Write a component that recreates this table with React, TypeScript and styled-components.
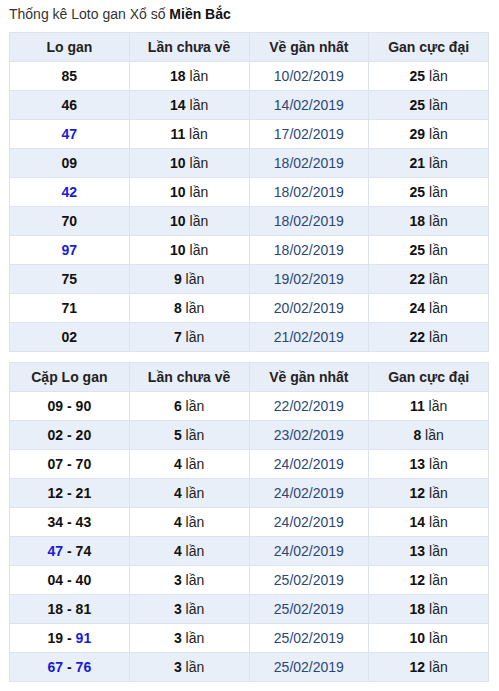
import React from "react";
import styled, { createGlobalStyle } from "styled-components";

const GlobalStyle = createGlobalStyle`
    body {
        margin: 0;
        background: #fff;
        font-family: "Liberation Sans", Arial, sans-serif;
        color: #222;
    }
`

const Page = styled.div`
    padding: 6px 10px 8px 9px;
    width: 480px;
`

const Title = styled.div`
    font-size: 14px;
    line-height: 17px;
    color: #333;
    margin-bottom: 9px;

    b {
        color: #111;
    }
`

const Table = styled.table`
    width: 480px;
    border-collapse: collapse;
    table-layout: fixed;
    margin-bottom: 10px;
    font-size: 14px;
`

const HeadCell = styled.th`
    height: 28px;
    padding: 0;
    background: #e8eef8;
    border: 1px solid #dde3ee;
    font-weight: bold;
    color: #222;
    text-align: center;
`

const Row = styled.tr<{ $alt: boolean }>`
    background: ${p => (p.$alt ? "#e9eff8" : "#fff")};
`

const Cell = styled.td`
    height: 28px;
    padding: 0;
    border: 1px solid #dde3ee;
    text-align: center;
    color: #222;
`

const Num = styled.b<{ $blue?: boolean }>`
    color: ${p => (p.$blue ? "#1a1ad8" : "#111")};
`

const DateText = styled.span`
    color: #2a4776;
`

type Item = [string, number, string, number];

const single: Item[] = [
    ["85", 18, "10/02/2019", 25],
    ["46", 14, "14/02/2019", 25],
    ["47", 11, "17/02/2019", 29],
    ["09", 10, "18/02/2019", 21],
    ["42", 10, "18/02/2019", 25],
    ["70", 10, "18/02/2019", 18],
    ["97", 10, "18/02/2019", 25],
    ["75", 9, "19/02/2019", 22],
    ["71", 8, "20/02/2019", 24],
    ["02", 7, "21/02/2019", 22],
];

const pairs: Item[] = [
    ["09 - 90", 6, "22/02/2019", 11],
    ["02 - 20", 5, "23/02/2019", 8],
    ["07 - 70", 4, "24/02/2019", 13],
    ["12 - 21", 4, "24/02/2019", 12],
    ["34 - 43", 4, "24/02/2019", 14],
    ["47 - 74", 4, "24/02/2019", 13],
    ["04 - 40", 3, "25/02/2019", 12],
    ["18 - 81", 3, "25/02/2019", 18],
    ["19 - 91", 3, "25/02/2019", 10],
    ["67 - 76", 3, "25/02/2019", 12],
];

// numbers shown in blue
const blue = ["47", "42", "97", "91", "67", "76"];

const Lo = ({ value }: { value: string }) => {
    const parts = value.split(" - ");
    if (parts.length === 1) return <Num $blue={blue.includes(value)}>{value}</Num>;
    return (
        <>
            <Num $blue={blue.includes(parts[0])}>{parts[0]}</Num>
            <Num> - </Num>
            <Num $blue={blue.includes(parts[1])}>{parts[1]}</Num>
        </>
    );
};

const GanTable = ({ first, rows }: { first: string; rows: Item[] }) => (
    <Table>
        <thead>
            <tr>
                <HeadCell>{first}</HeadCell>
                <HeadCell>Lần chưa về</HeadCell>
                <HeadCell>Về gần nhất</HeadCell>
                <HeadCell>Gan cực đại</HeadCell>
            </tr>
        </thead>
        <tbody>
            {rows.map((r, i) => (
                <Row key={r[0]} $alt={i % 2 === 1}>
                    <Cell><Lo value={r[0]} /></Cell>
                    <Cell><Num>{r[1]}</Num> lần</Cell>
                    <Cell><DateText>{r[2]}</DateText></Cell>
                    <Cell><Num>{r[3]}</Num> lần</Cell>
                </Row>
            ))}
        </tbody>
    </Table>
);

export default function App() {
    return (
        <Page>
            <GlobalStyle />
            <Title>Thống kê Loto gan Xổ số <b>Miền Bắc</b></Title>
            <GanTable first="Lo gan" rows={single} />
            <GanTable first="Cặp Lo gan" rows={pairs} />
        </Page>
    );
}
